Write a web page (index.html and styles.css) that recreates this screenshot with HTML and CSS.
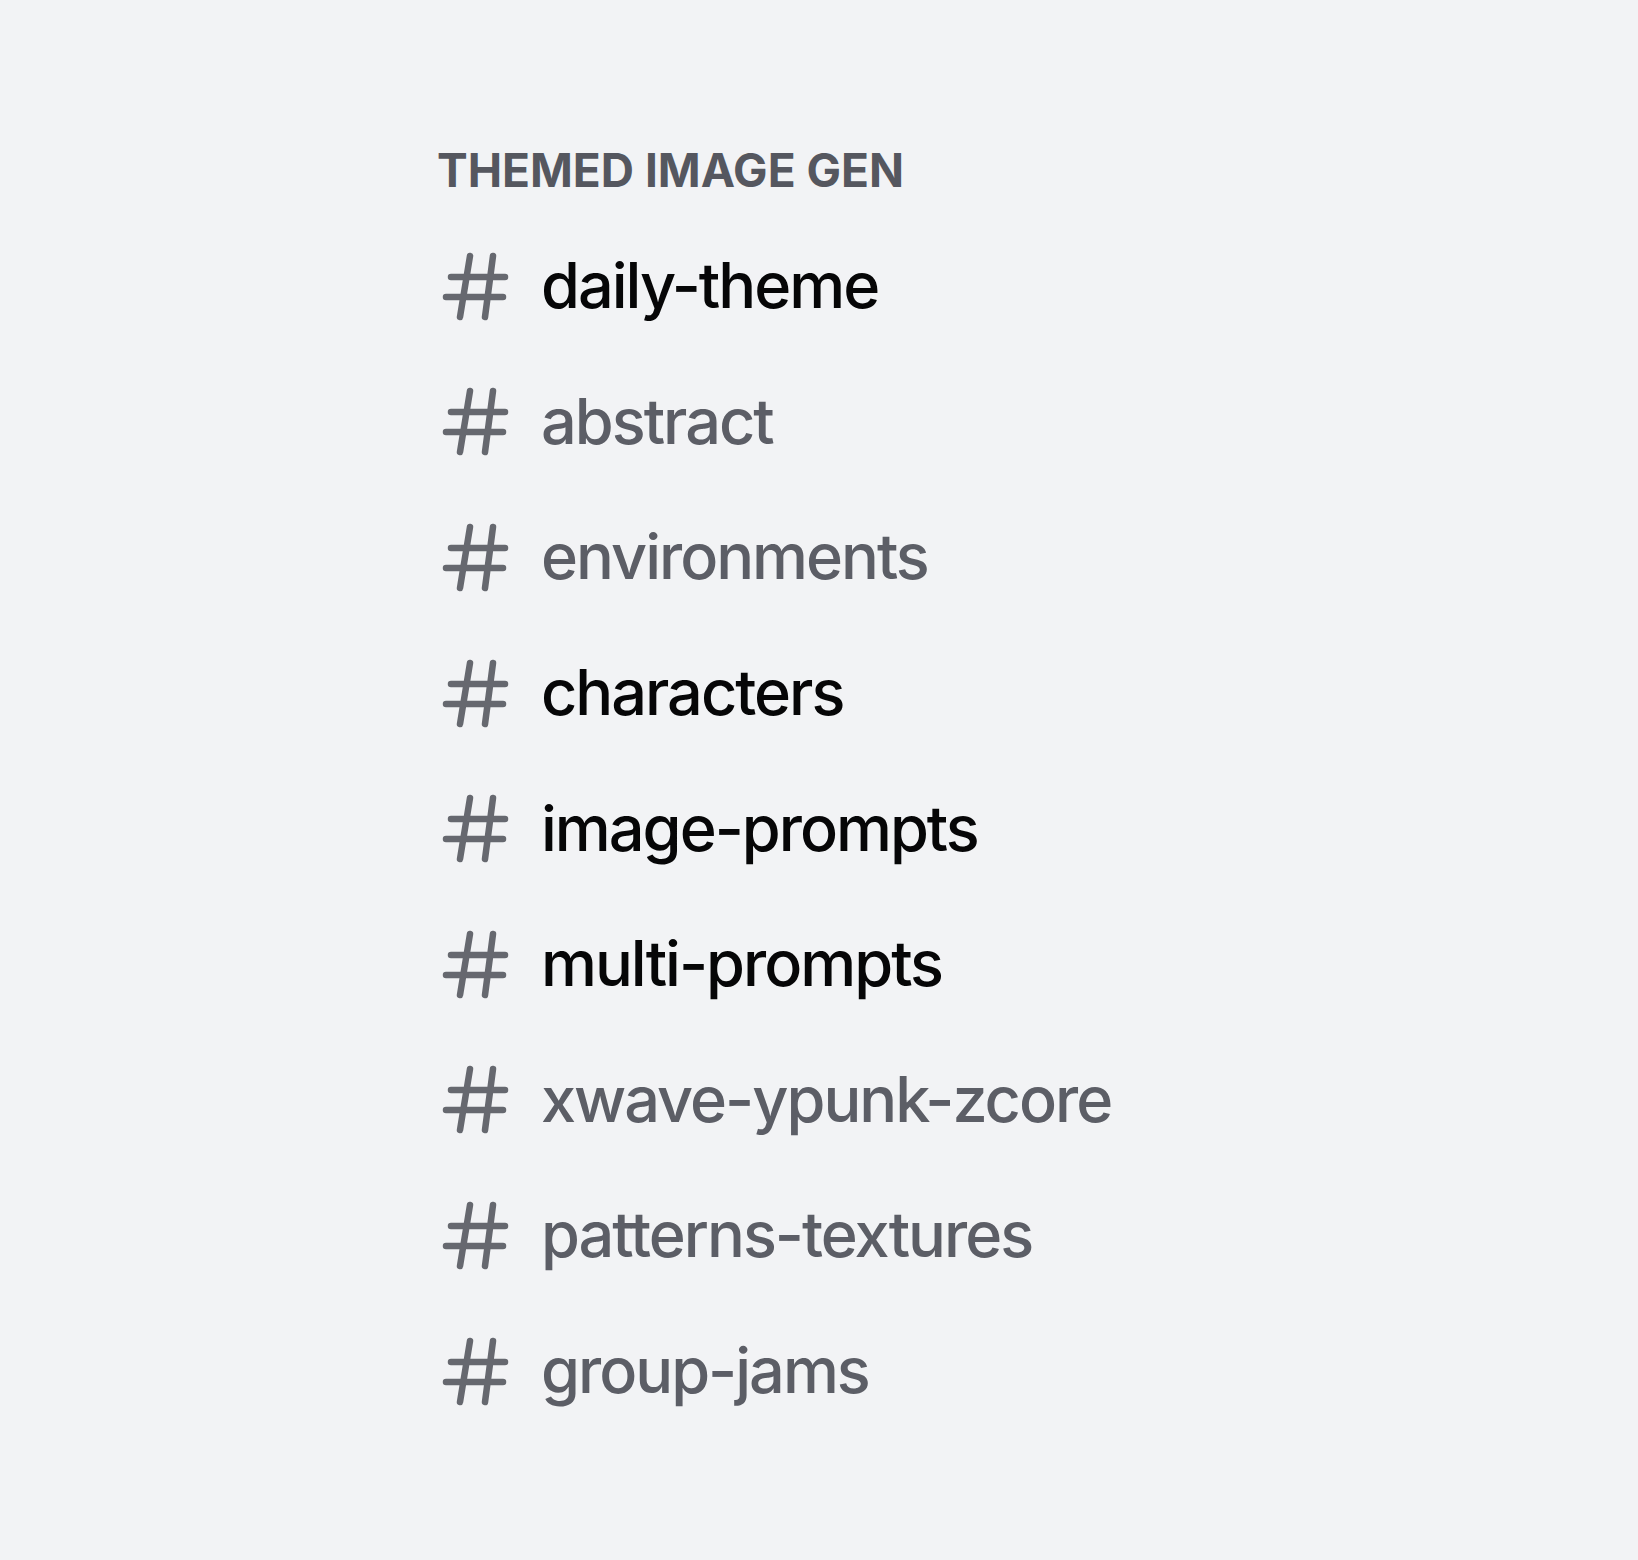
FILE: index.html
```html
<!DOCTYPE html>
<html>
<head>
<meta charset="utf-8">
<link rel="stylesheet" href="styles.css">
</head>
<body>
<nav class="sidebar">
  <h2 class="category">THEMED IMAGE GEN</h2>
  <ul class="channels">
    <li class="channel unread"><svg class="hash" viewBox="0 0 70 70"><path d="M29 5L19 66M52 5L44 66M10 26H64M5 46H62"/></svg><span class="name">daily-theme</span></li>
    <li class="channel"><svg class="hash" viewBox="0 0 70 70"><path d="M29 5L19 66M52 5L44 66M10 26H64M5 46H62"/></svg><span class="name">abstract</span></li>
    <li class="channel"><svg class="hash" viewBox="0 0 70 70"><path d="M29 5L19 66M52 5L44 66M10 26H64M5 46H62"/></svg><span class="name">environments</span></li>
    <li class="channel unread"><svg class="hash" viewBox="0 0 70 70"><path d="M29 5L19 66M52 5L44 66M10 26H64M5 46H62"/></svg><span class="name">characters</span></li>
    <li class="channel unread"><svg class="hash" viewBox="0 0 70 70"><path d="M29 5L19 66M52 5L44 66M10 26H64M5 46H62"/></svg><span class="name">image-prompts</span></li>
    <li class="channel unread"><svg class="hash" viewBox="0 0 70 70"><path d="M29 5L19 66M52 5L44 66M10 26H64M5 46H62"/></svg><span class="name">multi-prompts</span></li>
    <li class="channel"><svg class="hash" viewBox="0 0 70 70"><path d="M29 5L19 66M52 5L44 66M10 26H64M5 46H62"/></svg><span class="name">xwave-ypunk-zcore</span></li>
    <li class="channel"><svg class="hash" viewBox="0 0 70 70"><path d="M29 5L19 66M52 5L44 66M10 26H64M5 46H62"/></svg><span class="name">patterns-textures</span></li>
    <li class="channel"><svg class="hash" viewBox="0 0 70 70"><path d="M29 5L19 66M52 5L44 66M10 26H64M5 46H62"/></svg><span class="name">group-jams</span></li>
  </ul>
</nav>
</body>
</html>
```
FILE: styles.css
```css
html, body {
  margin: 0;
  padding: 0;
  background: #f2f3f5;
}
body {
  width: 1638px;
  height: 1560px;
  font-family: Inter, "Noto Sans", sans-serif;
}
.sidebar {
  display: flex;
  flex-direction: column;
  padding: 142px 0 0 437px;
}
.category {
  margin: 0;
  font-size: 46px;
  line-height: 56px;
  font-weight: 700;
  color: #55575f;
  letter-spacing: 0;
}
.channels {
  list-style: none;
  margin: 20px 0 0 0;
  padding: 0;
  display: flex;
  flex-direction: column;
}
.channel {
  display: flex;
  align-items: center;
  height: 135.6px;
}
.hash {
  width: 70px;
  height: 70px;
  margin-left: 4px;
  margin-right: 30px;
  flex: none;
}
.hash path {
  fill: none;
  stroke: #66686f;
  stroke-width: 6.5;
  stroke-linecap: round;
}
.name {
  font-size: 63px;
  font-weight: 500;
  color: #5c5e66;
  line-height: 1;
  letter-spacing: -2px;
}
.unread .name {
  color: #060607;
}
```
